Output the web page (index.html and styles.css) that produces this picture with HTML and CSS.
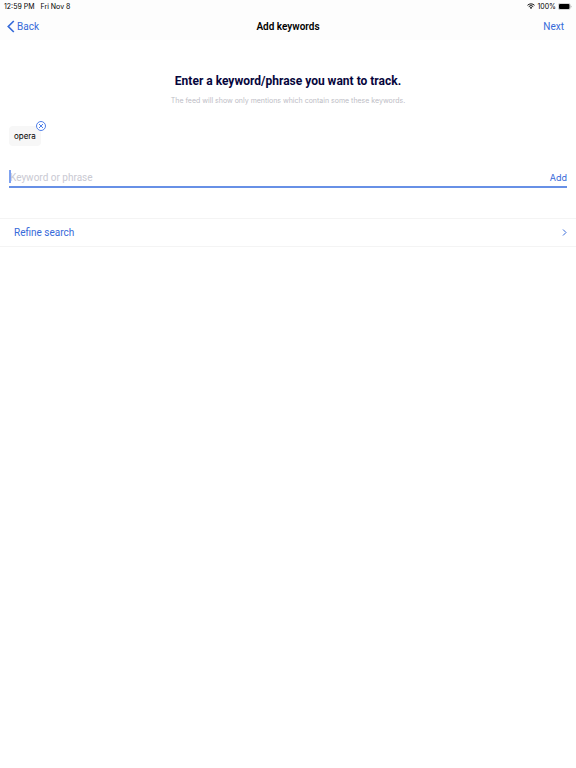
FILE: index.html
```html
<!DOCTYPE html>
<html lang="en">
<head>
<meta charset="utf-8">
<meta name="viewport" content="width=device-width, initial-scale=1">
<title>Add keywords</title>
<link rel="stylesheet" href="styles.css">
</head>
<body>
<header class="top">
  <div class="status">
    <div class="status-group status-time"><span>12:59 PM</span><span>Fri Nov 8</span></div>
    <div class="status-group">
      <svg class="wifi" viewBox="0 0 16 12" aria-hidden="true">
        <path d="M1 4.6a10 10 0 0 1 14 0M3.5 7.2a6.4 6.4 0 0 1 9 0" fill="none" stroke="#111" stroke-width="2"/>
        <path d="M8 12 5.5 9.4a3.6 3.6 0 0 1 5 0z" fill="#111"/>
      </svg>
      <span>100%</span>
      <svg class="battery" viewBox="0 0 28 14" aria-hidden="true">
        <rect x=".7" y=".7" width="23.6" height="12.6" rx="3.5" fill="#fff" stroke="#999" stroke-width="1"/>
        <rect x="2" y="2" width="21" height="10" rx="2" fill="#000"/>
        <path d="M25.6 4.8v4.4a2.4 2.4 0 0 0 0-4.4z" fill="#999"/>
      </svg>
    </div>
  </div>
  <nav class="nav">
    <a class="back" href="#">
      <svg class="back-icon" viewBox="0 0 8 13" aria-hidden="true"><path d="M6.8 1 1.3 6.5l5.5 5.5" fill="none" stroke="currentColor" stroke-width="1.7"/></svg>
      <span>Back</span>
    </a>
    <h1 class="nav-title">Add keywords</h1>
    <a class="next" href="#">Next</a>
  </nav>
</header>
<main>
  <section class="intro">
    <h2 class="intro-title">Enter a keyword/phrase you want to track.</h2>
    <p class="intro-text">The feed will show only mentions which contain some these keywords.</p>
  </section>
  <form class="keywords">
    <div class="tag">opera
      <button class="tag-remove" type="button" aria-label="Remove opera">
        <svg viewBox="0 0 10 10" aria-hidden="true"><circle cx="5" cy="5" r="4.5"/><path d="m3 3 4 4m0-4L3 7"/></svg>
      </button>
    </div>
    <div class="entry">
      <span class="caret"></span>
      <input class="entry-input" type="text" placeholder="Keyword or phrase" aria-label="Keyword or phrase">
      <button class="entry-add" type="submit">Add</button>
    </div>
  </form>
  <a class="refine" href="#">
    <span>Refine search</span>
    <svg class="chevron" viewBox="0 0 5 7" aria-hidden="true"><path d="m1 .5 3 3-3 3" fill="none" stroke="currentColor"/></svg>
  </a>
</main>
</body>
</html>
```
FILE: styles.css
```css
* {
  box-sizing: border-box;
}

body {
  margin: 0;
  background: #fff;
  color: #000;
  font-family: Roboto, "Liberation Sans", sans-serif;
  font-size: 10px;
}

a {
  color: #366ad9;
  text-decoration: none;
}

button,
input {
  border: 0;
  padding: 0;
  background: none;
  font: inherit;
}

.status,
.intro-text,
.tag,
.entry-add {
  font-family: Inter, "Liberation Sans", sans-serif;
}

.top {
  background: #fdfdfd;
}

.status {
  display: flex;
  justify-content: space-between;
  align-items: center;
  height: 12px;
  padding: 0 4px;
  font-size: 7px;
}

.status-group {
  display: flex;
  align-items: center;
  gap: 2px;
}

.status-time {
  gap: 6px;
}

.wifi {
  width: 8px;
  height: 6px;
}

.battery {
  width: 14px;
  height: 7px;
}

.nav {
  display: grid;
  grid-template-columns: 1fr auto 1fr;
  align-items: center;
  height: 28px;
}

.nav-title {
  margin: 0;
  font-size: 10px;
  font-weight: 600;
}

.back {
  display: flex;
  align-items: center;
  gap: 2px;
  padding-left: 7px;
}

.back-icon {
  width: 8px;
  height: 13px;
}

.next {
  justify-self: end;
  padding-right: 12px;
}

.intro {
  padding-top: 33px;
  text-align: center;
}

.intro-title {
  margin: 0;
  color: #06063c;
  font-size: 12px;
  line-height: 16px;
  font-weight: 700;
}

.intro-text {
  margin: 7px 0 0;
  color: #bdbdc5;
  font-size: 7px;
  line-height: 10px;
}

.keywords {
  padding: 20px 9px 0;
}

.tag {
  position: relative;
  width: fit-content;
  padding: 4px 5px;
  border-radius: 4px;
  background: #f7f7f7;
  font-size: 8px;
  line-height: 12px;
}

.tag-remove {
  position: absolute;
  top: -5px;
  right: -5px;
  width: 10px;
  height: 10px;
  border-radius: 50%;
  background: #fff;
  color: #4f7fe8;
}

.tag-remove svg {
  display: block;
  fill: none;
  stroke: currentColor;
}

.entry {
  position: relative;
  display: flex;
  align-items: center;
  height: 20px;
  margin-top: 22px;
  border-bottom: 2px solid #6790e6;
}

.caret {
  position: absolute;
  left: 0;
  top: 2px;
  width: 2px;
  height: 13px;
  background: #7fa2f0;
}

.entry-input {
  flex: 1;
  min-width: 0;
  padding-left: 1px;
  outline: 0;
}

.entry-input::placeholder {
  color: #c9c9d2;
  opacity: 1;
}

.entry-add {
  color: #366ad9;
  font-size: 9px;
}

.refine {
  display: flex;
  justify-content: space-between;
  align-items: center;
  height: 29px;
  margin-top: 30px;
  padding: 0 9px 0 14px;
  border: solid #f4f4f4;
  border-width: 1px 0;
}

.chevron {
  width: 5px;
  height: 7px;
}
```
